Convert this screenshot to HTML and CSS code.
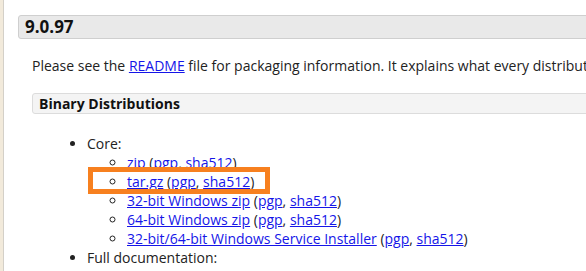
FILE: index.html
```html
<!DOCTYPE html>
<html lang="en">
  <head>
    <meta charset="UTF-8" />
    <meta name="viewport" content="width=device-width, initial-scale=1.0" />
    <title>Tomcat 9 Downloads</title>
    <link rel="stylesheet" href="styles.css">
  </head>
  <body>
    <div class="content">
      <div class="section">
        <h3 class="section-title">9.0.97</h3>
        <div class="section-body">
          <p>Please see the <a href="#">README</a> file for packaging information. It explains what every distribution contains.</p>

          <div class="subsection">
            <h4 class="subsection-title">Binary Distributions</h4>
            <ul class="dist-list">
              <li>Core:
                <ul>
                  <li><a href="#">zip</a> (<a href="#">pgp</a>, <a href="#">sha512</a>)</li>
                  <li class="marked">
                    <a href="#">tar.gz</a> (<a href="#">pgp</a>, <a href="#">sha512</a>)
                    <span class="highlight"></span>
                  </li>
                  <li><a href="#">32-bit Windows zip</a> (<a href="#">pgp</a>, <a href="#">sha512</a>)</li>
                  <li><a href="#">64-bit Windows zip</a> (<a href="#">pgp</a>, <a href="#">sha512</a>)</li>
                  <li><a href="#">32-bit/64-bit Windows Service Installer</a> (<a href="#">pgp</a>, <a href="#">sha512</a>)</li>
                </ul>
              </li>
              <li>Full documentation:
                <ul>
                  <li><a href="#">tar.gz</a> (<a href="#">pgp</a>, <a href="#">sha512</a>)</li>
                </ul>
              </li>
            </ul>
          </div>
        </div>
      </div>
    </div>
  </body>
</html>
```

FILE: styles.css
```css
html,
body {
  margin: 0;
  padding: 0;
  overflow: hidden;
  background-color: #fff;
}
body {
  font-family: "Open Sans", "Liberation Sans", sans-serif;
  font-size: 14px;
  line-height: 19px;
  color: #222;
  border-left: 3px solid #f2eadb;
}
.content {
  width: 800px;
  border-left: 1px solid #d4d0c8;
  padding: 15px 0 0 14px;
}
.section-title {
  margin: 0;
  height: 22px;
  line-height: 22px;
  padding: 0 6px;
  font-size: 17px;
  font-weight: bold;
  color: #111;
  background-color: #e9e9e9;
  border: 1px solid #cfcfcf;
  border-radius: 3px;
}
.section-body {
  padding: 0 0 0 14px;
}
.section-body p {
  margin: 17px 0 0;
}
a {
  color: #1515e8;
  text-decoration: underline;
}
.subsection-title {
  margin: 18px 0 0;
  height: 19px;
  line-height: 19px;
  padding: 0 6px;
  font-size: 14px;
  font-weight: bold;
  color: #111;
  background-color: #f4f4f4;
  border: 1px solid #dcdcdc;
  border-radius: 3px;
}
.dist-list {
  margin: 20px 0 0;
  padding-left: 55px;
}
.dist-list ul {
  margin: 0;
  padding-left: 40px;
}
.marked {
  position: relative;
}
.highlight {
  position: absolute;
  left: -39px;
  top: -5px;
  width: 172px;
  height: 17px;
  border: 5px solid #f7801f;
  pointer-events: none;
}
```
